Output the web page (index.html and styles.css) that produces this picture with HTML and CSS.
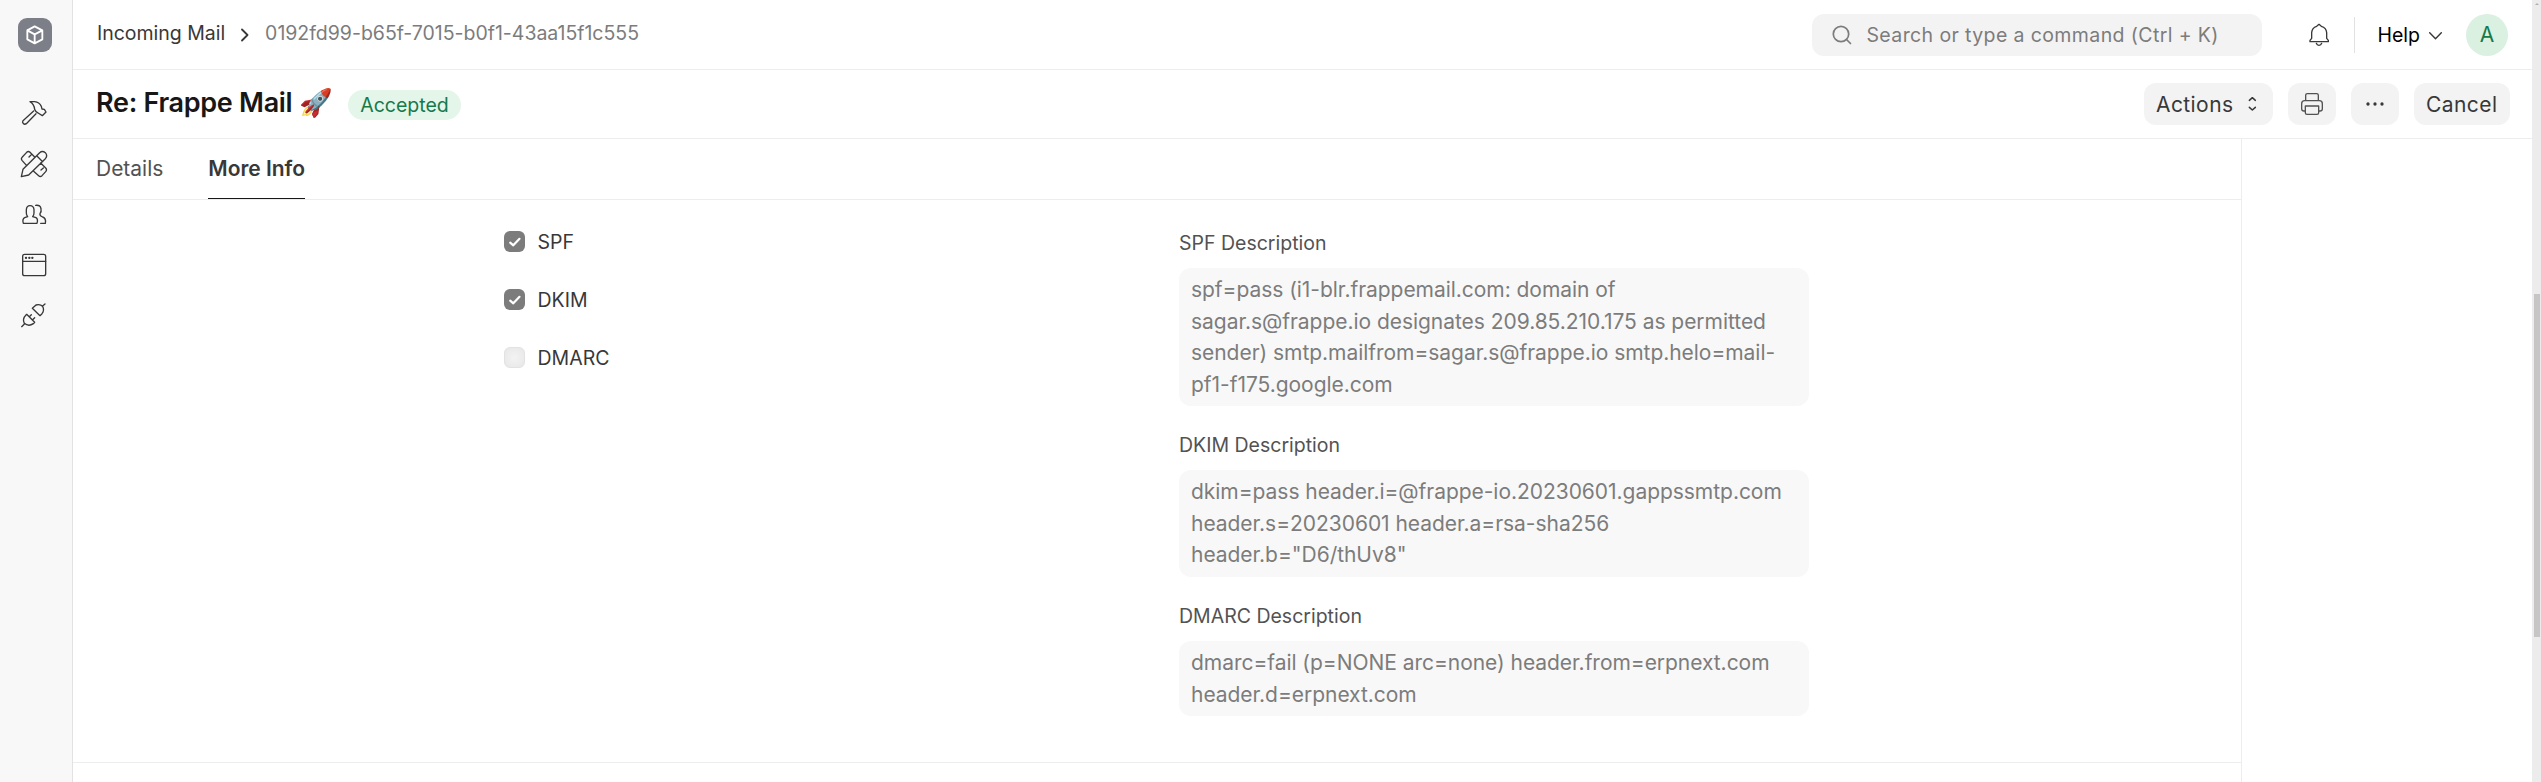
FILE: index.html
```html
<!DOCTYPE html>
<html lang="en">
<head>
<meta charset="utf-8">
<title>Re: Frappe Mail</title>
<link rel="stylesheet" href="styles.css">
</head>
<body>
<div class="app">
  <aside class="sidebar">
    <div class="logo">
      <svg viewBox="54 54 102 102" fill="none" stroke="#fff" stroke-width="5.5" stroke-linejoin="round"><path d="M104 79 127 91V118L104 130 82 118V91ZM82 91 104 103 127 91M104 103V130"/></svg>
    </div>
    <nav class="side-nav">
      <svg class="icon" viewBox="57 54 90 90"><path d="M90 65H104C114 66 120 71 124 79L126 87 133 88 138 96 127 107 119 102 108 95 104 88C103 78 98 70 90 65ZM101 93 69 122C65 128 72 136 79 131L108 101"/></svg>
      <svg class="icon" viewBox="57 204 90 90"><path d="M64 290 69 268 119 218Q127 211 136 218 144 227 136 236L86 285ZM110 227 128 245M80 257 66 241Q62 236 67 231L80 217Q85 212 90 217L104 231M87 231 93 225M122 249 137 264Q142 269 137 275L126 287Q121 292 116 287L100 273M123 270 130 264"/></svg>
      <svg class="icon" viewBox="57 354 90 90"><path d="M70 427Q66 414 74 410L83 407Q79 402 79 396V386Q80 374 90 374 101 374 102 386V396Q102 402 98 407L108 410Q115 414 111 427ZM107 373Q122 371 123 384 125 392 120 398 118 404 128 408 139 412 136 427H122"/></svg>
      <svg class="icon" viewBox="57 504 90 90"><rect x="68" y="520" width="69" height="64" rx="6"/><path d="M68 541H137"/><path class="dots" d="M78 530.500h.1M88 530.500h.1M97 530.500h.1"/></svg>
      <svg class="icon" viewBox="57 654 90 90"><path d="M78 702Q66 714 73 727 86 738 100 728L104 724 80 700ZM65 737 74 728M88 707 94 701M98 716 104 710M97 682 108 672Q120 668 128 676 134 688 126 698L120 704ZM127 676 135 669"/></svg>
    </nav>
  </aside>
  <div class="main">
    <header class="navbar">
      <div class="crumbs">
        <span class="crumb">Incoming Mail</span>
        <svg class="crumb-sep" viewBox="0 0 8 14"><path d="M1 1.500 6.500 7 1 12.500"/></svg>
        <span class="crumb crumb-id">0192fd99-b65f-7015-b0f1-43aa15f1c555</span>
      </div>
      <div class="nav-right">
        <div class="search">
          <svg viewBox="0 0 20 20"><circle cx="9" cy="9" r="7.700"/><path d="M14.500 14.500 18.500 18.500"/></svg>
          <span>Search or type a command (Ctrl + K)</span>
        </div>
        <svg class="bell" viewBox="567 66 60 72"><path d="M570 122V118L575 112V95Q576 80 590 76L597 70 604 76Q619 80 620 95V112L625 118V122ZM589 127Q591 133 597 133T605 127"/></svg>
        <div class="divider"></div>
        <div class="help"><span>Help</span><svg viewBox="0 0 13 8"><path d="M.7.700 6.500 6.700 12.300.7"/></svg></div>
        <div class="avatar">A</div>
      </div>
    </header>
    <div class="page-head">
      <h1 class="title"><span class="subject">Re: Frappe Mail</span> 🚀</h1>
      <span class="pill">Accepted</span>
      <div class="actions">
        <button class="btn actions-btn"><span>Actions</span><svg viewBox="384 288 26 48"><path d="M388 301 397 293 406 301M388 322 397 330 406 322"/></svg></button>
        <button class="btn icon-btn"><svg viewBox="540 276 72 72"><path d="M557 301V286Q557 281 562 281H590Q595 281 595 286V301M556 333H552Q545 333 545 326V311Q545 302 554 302H598Q607 302 607 311V326Q607 333 600 333H596M556 318H596V338Q596 343 591 343H561Q556 343 556 338Z"/></svg></button>
        <button class="btn icon-btn"><svg viewBox="729 276 72 72"><g class="solid"><circle cx="744" cy="312" r="5"/><circle cx="765" cy="312" r="5"/><circle cx="786" cy="312" r="5"/></g></svg></button>
        <button class="btn cancel-btn">Cancel</button>
      </div>
    </div>
    <div class="page-body">
      <div class="form">
        <div class="tabs">
          <div class="tab">Details</div>
          <div class="tab active">More Info</div>
        </div>
        <div class="section">
          <div class="checks">
            <label class="check"><span class="box on"><svg viewBox="0 0 21 21"><path d="M6.200 11.600 9.300 14.300 15.500 7.800"/></svg></span><span>SPF</span></label>
            <label class="check"><span class="box on"><svg viewBox="0 0 21 21"><path d="M6.200 11.600 9.300 14.300 15.500 7.800"/></svg></span><span>DKIM</span></label>
            <label class="check"><span class="box"></span><span>DMARC</span></label>
          </div>
          <div class="fields">
            <div class="field"><div class="label">SPF Description</div><div class="value">spf=pass (i1-blr.frappemail.com: domain of<br>sagar.s@frappe.io designates 209.85.210.175 as permitted<br>sender) smtp.mailfrom=sagar.s@frappe.io smtp.helo=mail-<br>pf1-f175.google.com</div></div>
            <div class="field"><div class="label">DKIM Description</div><div class="value">dkim=pass header.i=@frappe-io.20230601.gappssmtp.com<br>header.s=20230601 header.a=rsa-sha256<br>header.b="D6/thUv8"</div></div>
            <div class="field"><div class="label">DMARC Description</div><div class="value">dmarc=fail (p=NONE arc=none) header.from=erpnext.com<br>header.d=erpnext.com</div></div>
          </div>
        </div>
      </div>
      <div class="aside"></div>
    </div>
  </div>
  <div class="scrollbar"><svg viewBox="0 0 9 6"><path d="M3 5 5 3 7 5Z"/></svg><div class="thumb"></div></div>
</div>
</body>
</html>
```
FILE: styles.css
```css
* { box-sizing: border-box; }
body { margin: 0; font-family: Inter, sans-serif; font-size: 19.5px; color: #383838; background: #fff; }
svg { display: block; fill: none; stroke: #383838; stroke-linecap: round; stroke-linejoin: round; }
.app { display: flex; width: 2541px; height: 782px; overflow: hidden; }
.sidebar { width: 73px; background: #f8f8f8; border-right: 1px solid #e2e2e2; padding: 18px 0 0 18px; }
.logo { width: 34px; height: 34px; border-radius: 9px; background: #7c7f88; }
.logo svg { width: 34px; height: 34px; stroke: #fff; }
.side-nav { display: flex; flex-direction: column; gap: 20.3px; padding: 46px 0 0 1px; }
.icon { width: 30px; height: 30px; stroke-width: 4px; }
.dots { stroke-width: 7px; }
.main { flex: 1; display: flex; flex-direction: column; min-width: 0; }
.navbar { height: 70px; border-bottom: 1px solid #ededed; display: flex; justify-content: space-between; align-items: center; padding: 0 24px 0 24px; }
.crumbs { display: flex; align-items: center; padding-bottom: 3px; }
.crumb { letter-spacing: -.02px; }
.crumb-sep { width: 8px; height: 14px; stroke-width: 1.8px; margin: 3px 16px 0 16px; }
.crumb-id { color: #7c7c7c; }
.nav-right { display: flex; align-items: center; }
.search { width: 450px; height: 42px; border-radius: 12px; background: #f3f3f3; display: flex; align-items: center; padding-left: 20px; gap: 14px; color: #7c7c7c; letter-spacing: .02em; }
.search svg { width: 20px; height: 20px; stroke: #7c7c7c; stroke-width: 1.7px; }
.bell { width: 20px; height: 24px; margin: 0 25px 0 47px; stroke-width: 4px; }
.divider { width: 1px; height: 36px; background: #e2e2e2; }
.help { display: flex; align-items: center; color: #000; margin-left: 22px; gap: 9px; }
.help svg { width: 13px; height: 8px; stroke-width: 1.4px; margin-top: 3px; }
.avatar { width: 42px; height: 42px; border-radius: 50%; background: #daf0e1; color: #16794c; display: flex; align-items: center; justify-content: center; margin-left: 24px; font-size: 21px; }
.page-head { height: 69px; border-bottom: 1px solid #ededed; display: flex; align-items: center; padding: 0 22px 0 23px; }
.title { margin: 0; padding-bottom: 3px; font-size: 27px; font-weight: 600; color: #171717; }
.subject { letter-spacing: -.3px; }
.pill { height: 30px; border-radius: 15px; background: #e4f5e9; color: #16794c; padding: 0 12px; line-height: 30px; margin: 2px 0 0 15px; }
.actions { display: flex; gap: 15px; margin-left: auto; }
.btn { border: 0; height: 42px; border-radius: 12px; background: #f3f3f3; display: flex; align-items: center; font: 400 21px Inter, sans-serif; color: #383838; padding: 0 12px; letter-spacing: .02em; }
.actions-btn { width: 129px; justify-content: space-between; }
.actions-btn svg { width: 8.700px; height: 16px; margin-right: 4px; stroke-width: 4.500px; }
.icon-btn { width: 48px; }
.icon-btn svg { width: 24px; height: 24px; stroke-width: 4px; stroke: #525252; }
.icon-btn .solid { fill: #383838; stroke: none; }
.cancel-btn { width: 96px; }
.page-body { flex: 1; display: flex; }
.form { width: 2169px; border-right: 1px solid #ededed; }
.tabs { height: 61px; border-bottom: 1px solid #ededed; display: flex; gap: 45px; padding-left: 23px; }
.tab { line-height: 59px; font-size: 21px; letter-spacing: -.02px; color: #525252; }
.tab.active { font-weight: 600; color: #383838; border-bottom: 1px solid #171717; }
.section { height: 563px; border-bottom: 1px solid #ededed; display: flex; padding: 31px 0 0 431px; }
.checks { width: 675px; display: flex; flex-direction: column; gap: 37px; }
.check { display: flex; align-items: center; gap: 12.5px; height: 21px; }
.box { width: 21px; height: 21px; border-radius: 6px; background: radial-gradient(#f3f3f3, #e7e7e7); border: 1px solid #e2e2e2; }
.box.on { background: #7c7c7c; border: 0; }
.box svg { width: 21px; height: 21px; stroke: #fff; stroke-width: 2.200px; }
.fields { width: 630px; }
.label { color: #525252; line-height: 24px; height: 37px; }
.field + .field .label { padding-top: .25px; height: 37.25px; }
.value { background: #f8f8f8; border-radius: 12px; color: #7c7c7c; font-size: 21px; line-height: 31.500px; letter-spacing: -.04px; padding: 6px 12px; margin-bottom: 27px; }
.scrollbar { width: 9px; background: #ececec; }
.scrollbar svg { width: 9px; height: 6px; fill: #b0b0b0; stroke: none; }
.thumb { width: 6px; height: 343px; margin: 288px 0 0 2px; background: #c6c6c6; }
```
